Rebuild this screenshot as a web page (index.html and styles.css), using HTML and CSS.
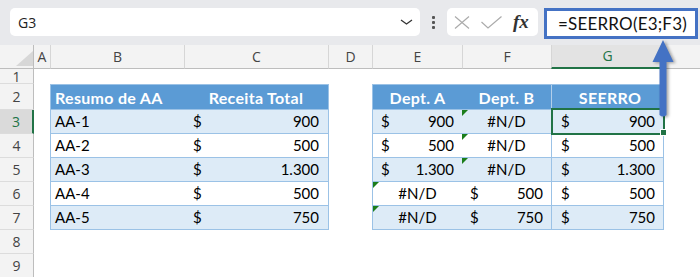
FILE: index.html
```html
<!DOCTYPE html>
<html>
	<head>
		<meta charset="utf-8" />
		<title>SEERRO</title>
		<link rel="stylesheet" href="styles.css">
	</head>
	<body>
		<div class="toolbar">
			<div class="namebox">
				<span>G3</span>
				<svg class="chev" width="13" height="6" viewBox="0 0 13 6"><polyline points="1,1 6.5,5 12,1" /></svg>
			</div>
			<div class="grip"><i></i><i></i><i></i></div>
			<div class="fxbox">
				<svg class="ico" width="16" height="13" viewBox="0 0 16 13"><path d="M1 0.5 L15 12.5 M15 0.5 L1 12.5" /></svg>
				<svg class="ico" width="21" height="13" viewBox="0 0 21 13"><polyline points="0.5,6 7,12 20.5,0.5" /></svg>
				<span class="fx">fx</span>
			</div>
			<div class="formula">=SEERRO(E3;F3)</div>
		</div>

		<div class="sheet">
			<div class="corner"><i></i></div>
			<div class="colh">A</div>
			<div class="colh">B</div>
			<div class="colh">C</div>
			<div class="colh">D</div>
			<div class="colh">E</div>
			<div class="colh">F</div>
			<div class="colh active">G</div>
			<div class="colh"></div>

			<div class="rowh">1</div>
			<div class="rowh">2</div>
			<div class="rowh active">3</div>
			<div class="rowh">4</div>
			<div class="rowh">5</div>
			<div class="rowh">6</div>
			<div class="rowh">7</div>
			<div class="rowh">8</div>
			<div class="rowh">9</div>

			<!-- Resumo de AA -->
			<div class="tbl t1">
				<div class="r hdr">
					<div class="left">Resumo de AA</div>
					<div>Receita Total</div>
				</div>
				<div class="r band">
					<div>AA-1</div>
					<div class="acc"><span>$</span><span>900</span></div>
				</div>
				<div class="r">
					<div>AA-2</div>
					<div class="acc"><span>$</span><span>500</span></div>
				</div>
				<div class="r band">
					<div>AA-3</div>
					<div class="acc"><span>$</span><span>1.300</span></div>
				</div>
				<div class="r">
					<div>AA-4</div>
					<div class="acc"><span>$</span><span>500</span></div>
				</div>
				<div class="r band">
					<div>AA-5</div>
					<div class="acc"><span>$</span><span>750</span></div>
				</div>
			</div>

			<!-- Dept. A / Dept. B / SEERRO -->
			<div class="tbl t2">
				<div class="r hdr">
					<div>Dept. A</div>
					<div>Dept. B</div>
					<div class="g">SEERRO</div>
				</div>
				<div class="r band">
					<div class="acc"><span>$</span><span>900</span></div>
					<div class="ctr err">#N/D</div>
					<div class="acc g cur"><span>$</span><span>900</span><b class="selbox"></b></div>
				</div>
				<div class="r">
					<div class="acc"><span>$</span><span>500</span></div>
					<div class="ctr err">#N/D</div>
					<div class="acc g"><span>$</span><span>500</span></div>
				</div>
				<div class="r band">
					<div class="acc"><span>$</span><span>1.300</span></div>
					<div class="ctr err">#N/D</div>
					<div class="acc g"><span>$</span><span>1.300</span></div>
				</div>
				<div class="r">
					<div class="ctr err">#N/D</div>
					<div class="acc"><span>$</span><span>500</span></div>
					<div class="acc g"><span>$</span><span>500</span></div>
				</div>
				<div class="r band">
					<div class="ctr err">#N/D</div>
					<div class="acc"><span>$</span><span>750</span></div>
					<div class="acc g"><span>$</span><span>750</span></div>
				</div>
			</div>
		</div>

		<svg class="arrow" width="28" height="84" viewBox="0 0 28 84">
			<path d="M13 2 L23.5 24 L16.5 24 L16.5 77 Q13 80 9.5 77 L9.5 24 L2.5 24 Z" />
		</svg>
	</body>
</html>
```

FILE: styles.css
```css
body {
	margin: 0;
	background: #fff;
	overflow: hidden;
	position: relative;
	font-family: "Open Sans", sans-serif;
}

/* formula bar */

.toolbar {
	display: flex;
	align-items: flex-start;
	height: 45px;
	box-sizing: border-box;
	padding: 8px 2px 0 10px;
	background: #e8e9ec;
}

.namebox {
	width: 410px;
	height: 28px;
	box-sizing: border-box;
	padding: 0 7px 0 8px;
	display: flex;
	align-items: center;
	justify-content: space-between;
	background: #fff;
	border-radius: 5px;
	font-size: 14px;
	color: #222;
}

.chev polyline {
	fill: none;
	stroke: #333;
	stroke-width: 1.3;
}

.grip {
	width: 27px;
	height: 28px;
	display: flex;
	flex-direction: column;
	align-items: center;
	justify-content: center;
	gap: 2px;
}

.grip i {
	width: 3px;
	height: 3px;
	border-radius: 1px;
	background: #555;
}

.fxbox {
	width: 91px;
	height: 28px;
	box-sizing: border-box;
	padding-left: 7px;
	display: flex;
	align-items: center;
	gap: 11px;
	background: #fff;
	border-radius: 5px;
}

.ico path,
.ico polyline {
	fill: none;
	stroke: #ababab;
	stroke-width: 1.2;
}

.fx {
	font-family: "Liberation Serif", serif;
	font-style: italic;
	font-weight: bold;
	font-size: 19px;
	color: #333;
}

.formula {
	flex: 1;
	height: 31px;
	margin-left: 6px;
	box-sizing: border-box;
	padding-left: 11px;
	border: 3px solid #4472c4;
	background: #fff;
	font-family: Lato, sans-serif;
	font-size: 17px;
	line-height: 25px;
	letter-spacing: 0.2px;
	color: #111;
}

/* grid */

.sheet {
	display: grid;
	grid-template-columns: 34px 16px 134px 144px 44px 90px 89px 112px 1fr;
	grid-template-rows: 24px 15px 26px repeat(7, 24px);
	font-family: Lato, sans-serif;
	font-size: 15px;
	color: #000;
}

.corner {
	grid-row: 1;
	display: flex;
	justify-content: flex-end;
	align-items: flex-end;
	padding: 0 0 2px 0;
	background: #f3f3f3;
	border-right: 1px solid #bdbdbd;
	border-bottom: 1px solid #bdbdbd;
}

.corner i {
	width: 0;
	height: 0;
	border-left: 17px solid transparent;
	border-bottom: 15px solid #d7d7d7;
}

.colh {
	grid-row: 1;
	background: #f3f3f3;
	border-bottom: 1px solid #bdbdbd;
	text-align: center;
	font-family: "Open Sans", sans-serif;
	font-size: 14px;
	line-height: 23px;
	color: #444;
}

.colh + .colh {
	border-left: 1px solid #d6d6d6;
}

.colh.active {
	background: #e3e3e3;
	color: #217346;
	border-bottom: 2px solid #217346;
	line-height: 22px;
}

.rowh {
	grid-column: 1;
	display: flex;
	align-items: center;
	justify-content: center;
	background: #f3f3f3;
	border-right: 1px solid #bdbdbd;
	border-bottom: 1px solid #dcdcdc;
	font-family: "Open Sans", sans-serif;
	font-size: 14px;
	color: #444;
}

.rowh.active {
	background: #dadada;
	color: #217346;
	border-right: 2px solid #217346;
}

/* tables */

.tbl {
	display: grid;
	grid-template-rows: repeat(6, 1fr);
	border: 1px solid #9bc2e6;
	margin-right: -1px;
}

.t1 {
	grid-column: 3 / 5;
	grid-row: 3 / 9;
	grid-template-columns: 133px 1fr;
}

.t2 {
	grid-column: 6 / 9;
	grid-row: 3 / 9;
	grid-template-columns: 89px 89px 1fr;
}

.r {
	display: contents;
}

.r > div {
	padding: 0 4px;
	border-top: 1px solid #9bc2e6;
	line-height: 23px;
	white-space: nowrap;
}

.hdr > div {
	border-top: none;
	padding-top: 1px;
	background: #5b9bd5;
	color: #fff;
	font-size: 16px;
	font-weight: bold;
	letter-spacing: 0.3px;
	text-align: center;
}

.hdr > div.left {
	text-align: left;
}

.band > div {
	background: #ddebf7;
}

.r > .acc {
	display: flex;
	justify-content: space-between;
	padding: 0 8px 0 8px;
}

.t1 .r > .acc {
	padding: 0 9px 0 9px;
}

.ctr {
	text-align: center;
}

.r > .g {
	border-left: 1px solid #9bc2e6;
	padding-left: 9px;
}

.hdr > .g {
	border-left-color: #b3cfea;
}

.err {
	position: relative;
}

.err::before {
	content: "";
	position: absolute;
	left: 0;
	top: 0;
	border-top: 6px solid #1b7d1b;
	border-right: 6px solid transparent;
}

.cur {
	position: relative;
}

.selbox {
	position: absolute;
	left: -1px;
	top: -2px;
	right: -2px;
	bottom: -2px;
	border: 2px solid #217346;
}

.selbox::after {
	content: "";
	position: absolute;
	right: -4px;
	bottom: -3px;
	width: 5px;
	height: 5px;
	background: #217346;
	border: 1px solid #fff;
}

/* callout arrow */

.arrow {
	position: absolute;
	left: 650px;
	top: 38px;
	filter: drop-shadow(2px 1px 1.5px rgba(0, 0, 0, 0.35));
}

.arrow path {
	fill: #4472c4;
}
```
